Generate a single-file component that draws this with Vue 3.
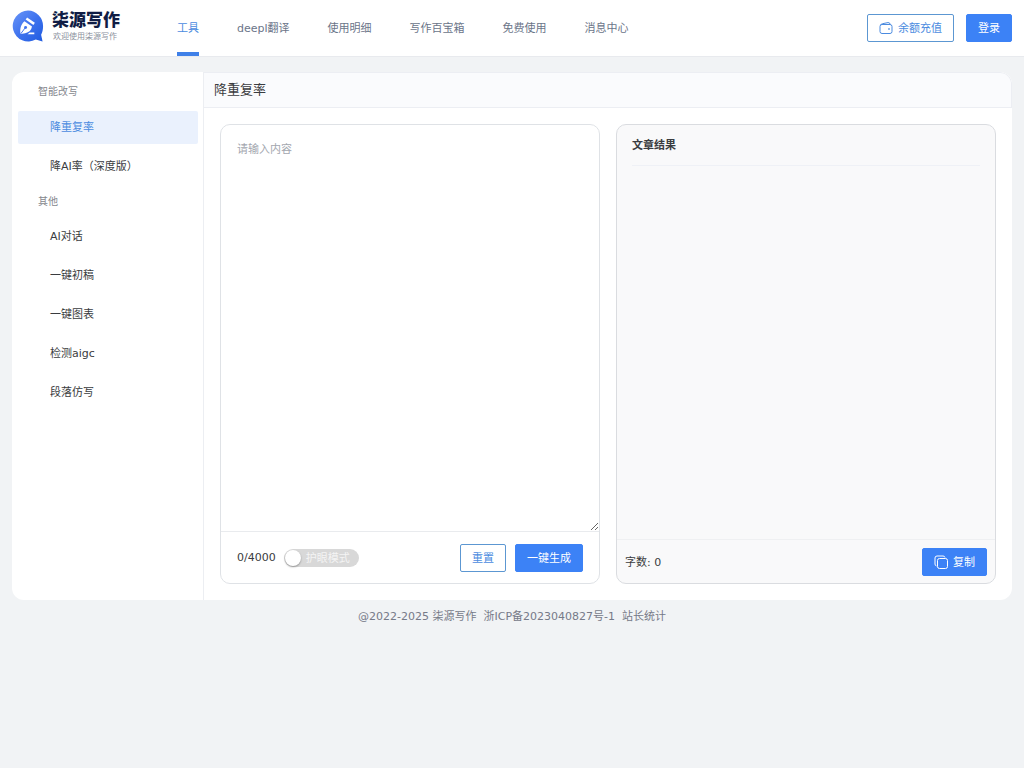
<script setup>
import { ref } from 'vue'

const navItems = ['工具', 'deepl翻译', '使用明细', '写作百宝箱', '免费使用', '消息中心']
const groups = [
  { title: '智能改写', items: ['降重复率', '降AI率（深度版）'] },
  { title: '其他', items: ['AI对话', '一键初稿', '一键图表', '检测aigc', '段落仿写'] }
]
const activeNav = ref('工具')
const activeTool = ref('降重复率')
const text = ref('')
const result = ref('')
const eyeCare = ref(false)
</script>

<template>
  <div class="page">
    <header class="header">
      <a href="#" class="brand">
        <svg class="logo" viewBox="0 0 34 34" aria-hidden="true">
          <defs>
            <linearGradient id="logo-fill" x1="0" y1="0" x2="1" y2="1">
              <stop offset="0" stop-color="#6a96f8" />
              <stop offset="0.5" stop-color="#3f73ee" />
              <stop offset="1" stop-color="#1f5be0" />
            </linearGradient>
          </defs>
          <path fill="url(#logo-fill)" d="M16.500 1a16 16 0 0 1 15.500 16c0 4-.8 6.500-2 9l1.500 7-7-2A16 16 0 1 1 16.500 1Z" />
          <path fill="none" stroke="#fff" stroke-width="2.600" d="M14.800 9.200l8 5.600" />
          <path fill="#fff" d="M12.800 12l7.800 5.600c-.6 3.800-3 6-7 6.800l-4.800.8c-.9-5 .2-10 4-13.200Z" />
          <path fill="none" stroke="#3f73ee" stroke-width="1" d="M9 25l4.500-6" />
          <circle cx="14" cy="18.500" r="1.500" fill="#3f73ee" />
          <path fill="#fff" d="M16 25.500l2.200-1.700h4.800v1.700z" />
        </svg>
        <span class="brand-text">
          <strong>柒源写作</strong>
          <small>欢迎使用柒源写作</small>
        </span>
      </a>
      <nav class="nav">
        <a v-for="n in navItems" :key="n" href="#" :class="{ active: n === activeNav }" @click.prevent="activeNav = n">{{ n }}</a>
      </nav>
      <div class="actions">
        <button type="button" class="btn outline">
          <svg class="icon" viewBox="0 0 14 14" aria-hidden="true">
            <rect x="1" y="3.500" width="12" height="9" rx="2" />
            <path d="M1.500 4Q2 3 3.500 2.700L9 1.600q1.800-.3 2.300 1.900" />
            <circle cx="10" cy="8" r=".5" />
          </svg>
          余额充值
        </button>
        <button type="button" class="btn primary">登录</button>
      </div>
    </header>

    <div class="shell">
      <aside class="sidebar">
        <section v-for="g in groups" :key="g.title">
          <h2>{{ g.title }}</h2>
          <ul>
            <li v-for="i in g.items" :key="i">
              <a href="#" :class="{ active: i === activeTool }" @click.prevent="activeTool = i">{{ i }}</a>
            </li>
          </ul>
        </section>
      </aside>

      <main class="main">
        <h1>{{ activeTool }}</h1>
        <div class="panels">
          <section class="card">
            <textarea v-model="text" maxlength="4000" placeholder="请输入内容" aria-label="请输入内容"></textarea>
            <div class="card-foot">
              <span>{{ text.length }}/4000</span>
              <label class="switch">
                <input v-model="eyeCare" type="checkbox" />
                <span>护眼模式</span>
              </label>
              <div class="buttons">
                <button type="button" class="btn outline" @click="text = ''">重置</button>
                <button type="button" class="btn primary">一键生成</button>
              </div>
            </div>
          </section>
          <section class="card result">
            <h3>文章结果</h3>
            <div class="output">{{ result }}</div>
            <div class="result-foot">
              <span>字数: {{ result.length }}</span>
              <button type="button" class="btn primary">
                <svg class="icon" viewBox="0 0 14 14" aria-hidden="true">
                  <rect x="3.500" y="3.500" width="10" height="10" rx="2" />
                  <path d="M2.500 11A2 2 0 0 1 1 9V3a2 2 0 0 1 2-2h6a2 2 0 0 1 2 1.500" />
                </svg>
                复制
              </button>
            </div>
          </section>
        </div>
      </main>
    </div>

    <footer class="footer">
      <span>@2022-2025 柒源写作</span>
      <a href="#">浙ICP备2023040827号-1</a>
      <a href="#">站长统计</a>
    </footer>
  </div>
</template>

<style>
body {
  background: #f1f3f5;
}
</style>

<style scoped>
.page {
  font: 11px/16px "DejaVu Sans", "Noto Sans CJK SC", sans-serif;
  color: #3a3c40;
}
.page * {
  box-sizing: border-box;
}
a {
  color: inherit;
  text-decoration: none;
}
h1, h2, h3, ul {
  margin: 0;
  padding: 0;
  font-weight: 400;
  list-style: none;
}
.header {
  display: flex;
  align-items: center;
  height: 57px;
  padding: 0 12px;
  background: #fff;
  border-bottom: 1px solid #e8eaee;
}
.brand {
  display: flex;
  align-items: center;
  gap: 7px;
  width: 165px;
  padding-bottom: 5px;
}
.logo {
  width: 33px;
  height: 34px;
}
.brand-text {
  display: flex;
  flex-direction: column;
  font-family: "Noto Sans CJK SC", sans-serif;
}
.brand-text strong {
  font-size: 17px;
  line-height: 20px;
  font-weight: 900;
  color: #101d45;
}
.brand-text small {
  font-size: 8px;
  line-height: 14px;
  padding-left: 1px;
  color: #8b909d;
}
.nav {
  display: flex;
  align-self: stretch;
  gap: 38px;
}
.nav a {
  display: flex;
  align-items: center;
  padding-top: 2px;
  border-top: 4px solid transparent;
  border-bottom: 4px solid transparent;
  color: #6b7589;
  white-space: nowrap;
}
.nav a.active {
  color: #4b8be0;
  border-bottom-color: #3f80e8;
}
.actions {
  display: flex;
  gap: 12px;
  margin-left: auto;
}
.btn {
  display: inline-flex;
  align-items: center;
  justify-content: center;
  gap: 5px;
  height: 28px;
  padding: 2px 11px 0;
  border: 1px solid #3c82f6;
  border-radius: 2px;
  font: inherit;
  white-space: nowrap;
  cursor: pointer;
}
.btn.primary {
  background: #3c82f6;
  color: #fff;
}
.btn.outline {
  background: #fff;
  border-color: #5c97d2;
  color: #4b8be0;
}
.icon {
  width: 14px;
  height: 14px;
  margin-bottom: 2px;
  fill: none;
  stroke: currentColor;
  stroke-width: 1;
}
.shell {
  display: flex;
  min-height: 528px;
  margin: 15px 12px 0;
  background: #fff;
  border-radius: 12px;
  overflow: hidden;
}
.sidebar {
  flex: 0 0 192px;
  padding: 0 5px 0 6px;
  border-right: 1px solid #eceef2;
}
.sidebar h2 {
  padding: 12px 20px 11px;
  font-size: 10px;
  line-height: 16px;
  color: #85888e;
}
.sidebar section + section h2 {
  padding: 11px 20px 10px;
}
.sidebar ul {
  display: grid;
  gap: 6px;
}
.sidebar li a {
  display: block;
  padding: 9px 32px 8px;
  border-radius: 2px;
}
.sidebar li a.active {
  background: #eaf1fd;
  color: #4b8be0;
}
.main {
  flex: 1;
  min-width: 0;
  display: flex;
  flex-direction: column;
}
.main h1 {
  padding: 7px 10px;
  font-size: 13px;
  line-height: 20px;
  background: #fafbfd;
  border: 1px solid #eceef3;
  border-left: 0;
  border-radius: 0 12px 0 0;
}
.panels {
  flex: 1;
  display: grid;
  grid-template-columns: 1fr 1fr;
  gap: 16px;
  padding: 16px;
}
.card {
  display: flex;
  flex-direction: column;
  min-width: 0;
  border: 1px solid #dfe2e6;
  border-radius: 10px;
  overflow: hidden;
}
textarea {
  flex: 1;
  width: 100%;
  padding: 17px 16px;
  border: 0;
  outline: 0;
  background: transparent;
  color: inherit;
  font: inherit;
  resize: both;
}
textarea::placeholder {
  color: #a3a7af;
}
.card-foot {
  display: flex;
  align-items: center;
  height: 52px;
  padding: 0 16px;
  border-top: 1px solid #e9ebee;
}
.switch span,
.result-foot span {
  padding-top: 2px;
}
.buttons {
  display: flex;
  gap: 9px;
  margin-left: auto;
}
.switch {
  display: flex;
  align-items: center;
  gap: 5px;
  height: 18px;
  margin-left: 8px;
  padding: 0 9px 0 1px;
  border-radius: 9px;
  background: #d8d8d8;
  color: #f4f4f4;
  cursor: pointer;
}
.switch input {
  appearance: none;
  width: 16px;
  height: 16px;
  margin: 0;
  border-radius: 50%;
  background: #fff;
  box-shadow: 0 1px 2px #0005;
}
.switch:has(input:checked) {
  background: #3c82f6;
}
.result {
  background: #f9f9fa;
  border-color: #dadce0;
}
.result h3 {
  margin: 0 15px;
  padding: 13px 0 11px;
  font-size: 11px;
  line-height: 16px;
  font-weight: 700;
  border-bottom: 1px solid #eff1f6;
}
.output {
  flex: 1;
  padding: 16px;
}
.result-foot {
  display: flex;
  align-items: center;
  justify-content: space-between;
  height: 44px;
  padding: 0 8px;
  border-top: 1px solid #eff0f2;
}
.footer {
  display: flex;
  justify-content: center;
  gap: 7px;
  padding: 9px 12px;
  color: #767a88;
}
</style>
